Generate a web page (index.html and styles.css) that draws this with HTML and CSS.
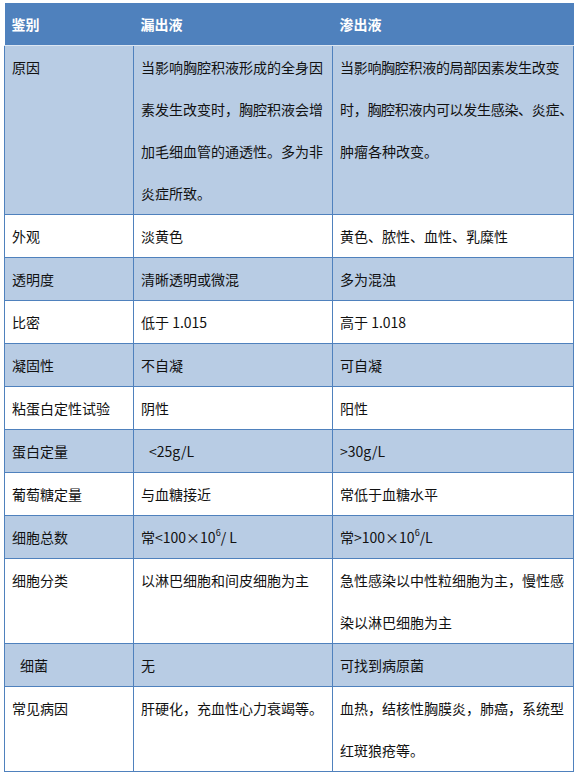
FILE: index.html
```html
<!DOCTYPE html>
<html lang="zh-CN">
<head>
<meta charset="utf-8">
<title>漏出液与渗出液鉴别</title>
<link rel="stylesheet" href="styles.css">
</head>
<body>
<table class="cmp">
  <colgroup>
    <col class="c1"><col class="c2"><col class="c3">
  </colgroup>
  <thead>
    <tr><th>鉴别</th><th>漏出液</th><th>渗出液</th></tr>
  </thead>
  <tbody>
    <tr class="alt"><td>原因</td><td>当影响胸腔积液形成的全身因素发生改变时，胸腔积液会增加毛细血管的通透性。多为非炎症所致。</td><td><span class="line">当影响胸腔积液的局部因素发生改变</span><br><span class="line">时，胸腔积液内可以发生感染、炎症、</span><br>肿瘤各种改变。</td></tr>
    <tr><td>外观</td><td>淡黄色</td><td>黄色、脓性、血性、乳糜性</td></tr>
    <tr class="alt"><td>透明度</td><td>清晰透明或微混</td><td>多为混浊</td></tr>
    <tr><td>比密</td><td>低于 1.015</td><td>高于 1.018</td></tr>
    <tr class="alt"><td>凝固性</td><td>不自凝</td><td>可自凝</td></tr>
    <tr><td>粘蛋白定性试验</td><td>阴性</td><td>阳性</td></tr>
    <tr class="alt"><td>蛋白定量</td><td class="indent">&lt;25g/L</td><td>&gt;30g/L</td></tr>
    <tr><td>葡萄糖定量</td><td>与血糖接近</td><td>常低于血糖水平</td></tr>
    <tr class="alt"><td>细胞总数</td><td>常&lt;100×10<sup>6</sup>/ L</td><td>常&gt;100×10<sup>6</sup>/L</td></tr>
    <tr><td>细胞分类</td><td>以淋巴细胞和间皮细胞为主</td><td>急性感染以中性粒细胞为主，慢性感染以淋巴细胞为主</td></tr>
    <tr class="alt"><td class="indent">细菌</td><td>无</td><td>可找到病原菌</td></tr>
    <tr><td>常见病因</td><td>肝硬化，充血性心力衰竭等。</td><td>血热，结核性胸膜炎，肺癌，系统型红斑狼疮等。</td></tr>
  </tbody>
</table>
</body>
</html>
```

FILE: styles.css
```css
html, body {
  margin: 0;
  padding: 0;
  background: #ffffff;
}

body {
  font-family: "Noto Sans CJK SC", "Microsoft YaHei", sans-serif;
  font-size: 14px;
  color: #111111;
}

.cmp {
  border-collapse: collapse;
  margin: 3px 0 0 4px;
  width: 569px;
  table-layout: fixed;
}

.c1 { width: 129px; }
.c2 { width: 199px; }
.c3 { width: 241px; }

.cmp th {
  background: #4f81bd;
  color: #ffffff;
  font-weight: bold;
  text-align: left;
  height: 42px;
  line-height: 42px;
  padding: 0 7px;
  border: none;
  border-bottom: 1px solid #dce6f2;
}

.cmp td {
  line-height: 42px;
  padding: 0 7px;
  vertical-align: top;
  border: 1px solid #4f81bd;
  background: #ffffff;
}

.cmp thead + tbody tr:first-child td {
  border-top: 1px solid #dce6f2;
}

.cmp tr.alt td {
  background: #b8cce4;
}

.cmp td.indent {
  padding-left: 15px;
}

.cmp .line {
  white-space: nowrap;
  letter-spacing: -0.3px;
}

.cmp sup {
  font-size: 9px;
  line-height: 0;
  vertical-align: 7px;
}
```
